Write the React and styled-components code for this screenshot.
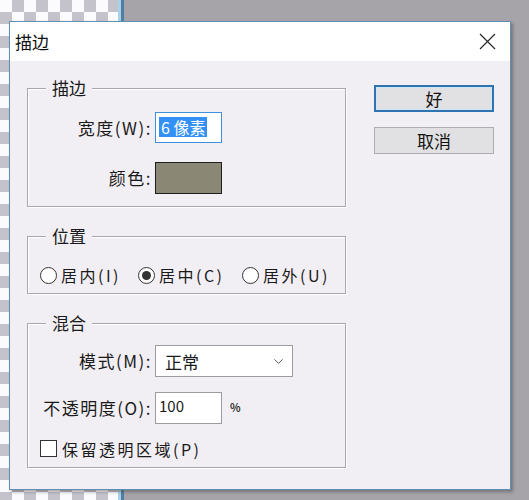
import styled, { createGlobalStyle } from "styled-components"
import { ChevronDown } from "lucide-react"

const GlobalStyle = createGlobalStyle`
    body {
        margin: 0;
        font-family: "Noto Sans CJK SC", "Noto Sans", sans-serif;
        color: #1a1a1a;
    }
`

export default function App() {
    return (
        <Desktop>
            <GlobalStyle />
            <Dialog>
                <TitleBar>
                    <Title>描边</Title>
                    <CloseIcon width="17" height="17" viewBox="0 0 17 17">
                        <path d="M1 1 L16 16 M16 1 L1 16" stroke="#222" strokeWidth="1.1" fill="none" />
                    </CloseIcon>
                </TitleBar>
                <Body>
                    <LeftColumn>
                        <Group $top={23} $bottom={12}>
                            <Legend>描边</Legend>
                            <FormGrid $gap={19}>
                                <Label>宽度(W):</Label>
                                <TextBox $focused $height={31}>
                                    <Selected>6 像素</Selected>
                                </TextBox>
                                <Label>颜色:</Label>
                                <Swatch $color="#8a8774" />
                            </FormGrid>
                        </Group>

                        <Group $top={28} $bottom={8}>
                            <Legend>位置</Legend>
                            <RadioRow>
                                <Option>
                                    <Radio />
                                    <OptionText>居内(I)</OptionText>
                                </Option>
                                <Option>
                                    <Radio $checked />
                                    <OptionText>居中(C)</OptionText>
                                </Option>
                                <Option>
                                    <Radio />
                                    <OptionText>居外(U)</OptionText>
                                </Option>
                            </RadioRow>
                        </Group>

                        <Group $top={21} $bottom={9}>
                            <Legend>混合</Legend>
                            <FormGrid $gap={15}>
                                <Label>模式(M):</Label>
                                <Select>
                                    <span>正常</span>
                                    <ChevronDown size={15} strokeWidth={1.6} color="#555" />
                                </Select>
                                <Label>不透明度(O):</Label>
                                <Inline>
                                    <TextBox $height={32}>
                                        <Value>100</Value>
                                    </TextBox>
                                    <Percent>%</Percent>
                                </Inline>
                            </FormGrid>
                            <CheckRow>
                                <CheckBox />
                                <OptionText>保留透明区域(P)</OptionText>
                            </CheckRow>
                        </Group>
                    </LeftColumn>

                    <Buttons>
                        <Button $primary>好</Button>
                        <Button>取消</Button>
                    </Buttons>
                </Body>
            </Dialog>
        </Desktop>
    )
}

const Desktop = styled.div`
    width: 529px;
    height: 500px;
    overflow: hidden;
    padding: 21px 0 0 9px;
    box-sizing: border-box;
    background:
        linear-gradient(to right, transparent 0 118px, #a9d1ea 118px 121px, #4f7fa2 121px 124px, #a7a4a9 124px),
        conic-gradient(#c4c2cb 25%, #fbfbfd 0 50%, #c4c2cb 0 75%, #fbfbfd 0) 0 0 / 24px 24px;
`

const Dialog = styled.div`
    width: 502px;
    height: 469px;
    box-sizing: border-box;
    border: 1px solid #5f8fb3;
    background: #f2eff4;
    box-shadow: 2px 2px 3px rgba(60, 60, 60, 0.45);
    display: flex;
    flex-direction: column;
`

const TitleBar = styled.div`
    height: 39px;
    background: #ffffff;
    display: flex;
    align-items: center;
    justify-content: space-between;
    padding: 0 14px 0 5px;
`

const Title = styled.div`
    font-size: 17px;
    color: #111;
`

const CloseIcon = styled.svg`
    display: block;
`

const Body = styled.div`
    flex: 1;
    display: flex;
    padding: 24px 15px 20px 17px;
    gap: 28px;
`

const LeftColumn = styled.div`
    width: 319px;
    padding-top: 3px;
    display: flex;
    flex-direction: column;
    gap: 29px;
`

const Group = styled.div`
    position: relative;
    border: 1px solid #a9a7ad;
    box-shadow: inset 1px 1px 0 #ffffff, 1px 1px 0 #ffffff;
    padding: ${p => p.$top}px 0 ${p => p.$bottom}px 0;
`

const Legend = styled.div`
    position: absolute;
    top: -11px;
    left: 18px;
    padding: 0 6px;
    background: #f2eff4;
    font-size: 17px;
    line-height: 20px;
`

const FormGrid = styled.div`
    display: grid;
    grid-template-columns: 124px auto;
    column-gap: 3px;
    row-gap: ${p => p.$gap}px;
    align-items: center;
    justify-items: start;
`

const Label = styled.div`
    justify-self: end;
    font-size: 17px;
    line-height: 20px;
    letter-spacing: 1.5px;
    white-space: nowrap;
`

const TextBox = styled.div`
    width: 67px;
    height: ${p => p.$height}px;
    box-sizing: border-box;
    background: #ffffff;
    border: 1px solid ${p => (p.$focused ? "#3f8fdc" : "#9d9ba1")};
    padding: 4px 3px 0;
    display: flex;
    align-items: flex-start;
`

const Selected = styled.span`
    background: #3391f5;
    color: #ffffff;
    font-size: 16px;
    line-height: 20px;
    padding: 0 2px;
`

const Value = styled.span`
    font-size: 15px;
    line-height: 18px;
`

const Swatch = styled.div`
    width: 67px;
    height: 32px;
    box-sizing: border-box;
    border: 1px solid #1e1e1e;
    background: ${p => p.$color};
`

const RadioRow = styled.div`
    display: grid;
    grid-template-columns: 98px 104px auto;
    padding-left: 12px;
    height: 20px;
    align-items: center;
`

const Option = styled.div`
    display: flex;
    align-items: center;
    gap: 4px;
`

const Radio = styled.span`
    width: 17px;
    height: 17px;
    box-sizing: border-box;
    border-radius: 50%;
    border: 1px solid #333;
    background: #fff;
    display: flex;
    align-items: center;
    justify-content: center;

    &::after {
        content: "";
        width: 9px;
        height: 9px;
        border-radius: 50%;
        background: ${p => (p.$checked ? "#333" : "transparent")};
    }
`

const OptionText = styled.span`
    font-size: 16px;
    line-height: 20px;
    letter-spacing: 2.5px;
    white-space: nowrap;
`

const Select = styled.div`
    width: 138px;
    height: 32px;
    box-sizing: border-box;
    border: 1px solid #9d9ba1;
    background: #ffffff;
    display: flex;
    align-items: center;
    justify-content: space-between;
    padding: 0 6px 0 9px;
    font-size: 17px;
`

const Inline = styled.div`
    display: flex;
    align-items: flex-start;
    gap: 8px;
`

const Percent = styled.span`
    font-size: 11px;
    font-weight: bold;
    margin-top: 7px;
    color: #333;
`

const CheckRow = styled.div`
    display: flex;
    align-items: center;
    gap: 5px;
    padding-left: 12px;
    margin-top: 15px;
    height: 19px;
`

const CheckBox = styled.span`
    width: 17px;
    height: 17px;
    box-sizing: border-box;
    border: 1px solid #333;
    background: #fff;
`

const Buttons = styled.div`
    width: 120px;
    display: flex;
    flex-direction: column;
    gap: 15px;
`

const Button = styled.button`
    height: 27px;
    box-sizing: border-box;
    background: #e1e1e3;
    border: ${p => (p.$primary ? "2px solid #2f73b0" : "1px solid #adadad")};
    box-shadow: ${p => (p.$primary ? "inset 0 0 0 1px #cfe6f8" : "none")};
    font-family: "Noto Sans CJK SC", sans-serif;
    font-size: 17px;
    line-height: 20px;
    color: #111;
    padding: 0;
`
